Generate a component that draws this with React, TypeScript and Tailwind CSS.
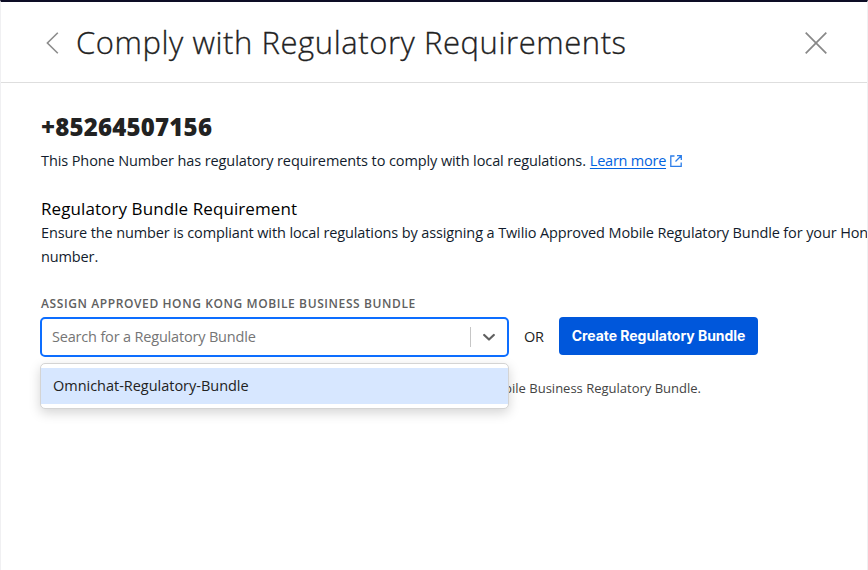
function BackIcon() {
  return (
    <svg className="h-[22px] w-[13px] shrink-0" viewBox="0 0 13 22" fill="none" stroke="#8c8c8c" strokeWidth="1.6">
      <path d="M11.8 0.8 1.4 11l10.4 10.2" />
    </svg>
  );
}

function CloseIcon() {
  return (
    <svg className="h-[22px] w-[22px] shrink-0" viewBox="0 0 22 22" fill="none" stroke="#888" strokeWidth="1.7">
      <path d="m0.7 0.7 20.6 20.6M21.3 0.7 0.7 21.3" />
    </svg>
  );
}

function ExternalIcon() {
  return (
    <svg className="h-3 w-3 shrink-0" viewBox="0 0 12 12" fill="none" stroke="#2b7de9" strokeWidth="1.3">
      <path d="M4.5 1H.8v10.3h10.4V7.5M7 .7h4.3V5M11.2.8 5.5 6.5" />
    </svg>
  );
}

export default function App() {
  return (
    <div className="h-[570px] w-[868px] overflow-hidden border-x border-t-2 border-x-[#f0f0f2] border-t-[#0d0d25] bg-white font-['Open_Sans','Noto_Sans',sans-serif] text-[#121c2d]">
      <header className="flex h-[81px] items-center border-b border-[#dedede] pl-[45px] pr-10">
        <div className="pt-0.5"><BackIcon /></div>
        <h1 className="ml-[17px] whitespace-nowrap text-[31px] font-light leading-10 tracking-[0.57px] text-[#222] [-webkit-text-stroke:0.3px_#222]">Comply with Regulatory Requirements</h1>
        <div className="ml-auto pt-0.5"><CloseIcon /></div>
      </header>
      <main className="pl-10 pt-[30px]">
        <h2 className="whitespace-nowrap text-[24px] font-extrabold leading-7 tracking-[0.2px] text-[#222]">+85264507156</h2>
        <p className="mt-2 flex items-center whitespace-nowrap text-[14.5px] leading-6 tracking-[-0.1px]">
          <span>This Phone Number has regulatory requirements to comply with local regulations.</span>
          <a className="ml-1 tracking-[-0.24px] text-[#0263e0] underline underline-offset-2">Learn more</a>
          <span className="ml-1"><ExternalIcon /></span>
        </p>
        <h3 className="mt-6 whitespace-nowrap text-[17px] leading-6 tracking-[0.09px] text-black">Regulatory Bundle Requirement</h3>
        <p className="text-[14.5px] leading-6 tracking-[-0.12px]">
          <span className="whitespace-nowrap">Ensure the number is compliant with local regulations by assigning a Twilio Approved Mobile Regulatory Bundle for your Hon</span>
          <br />number.
        </p>
        <label className="mt-[25px] block whitespace-nowrap text-[12px] font-semibold leading-5 tracking-[0.6px] text-[#606060]">ASSIGN APPROVED HONG KONG MOBILE BUSINESS BUNDLE</label>
        <div className="mt-[3px] flex items-start">
          <div className="relative -ml-px h-10 w-[469px] shrink-0">
            <div className="flex h-10 items-center rounded-[5px] border-2 border-[#0d6eff] bg-white">
              <span className="pl-2.5 text-[14.5px] tracking-[-0.18px] text-[#757575]">Search for a Regulatory Bundle</span>
              <span className="ml-auto h-5 w-px bg-[#c6c6c6]" />
              <svg className="ml-3 mr-3 h-3 w-3 shrink-0" viewBox="0 0 12 12" fill="none" stroke="#606060" strokeWidth="2.2" strokeLinecap="round" strokeLinejoin="round"><path d="m1.2 4 4.8 4.5L10.8 4" /></svg>
            </div>
            <div className="absolute left-0 top-[46px] z-10 h-[46px] w-[469px] rounded-[5px] border border-[#d4d4d4] bg-white py-1 shadow-[0_4px_12px_rgba(0,0,0,0.17)]">
              <div className="flex h-9 items-center bg-[#d7e7ff] pl-3 text-[14.5px] tracking-[-0.02px] text-[#222]">Omnichat-Regulatory-Bundle</div>
            </div>
          </div>
          <span className="ml-[15px] w-[35px] text-[14.5px] leading-[39px] tracking-[-0.16px] text-[#222]">OR</span>
          <button className="h-[38px] w-[199px] whitespace-nowrap rounded bg-[#0057db] pb-0.5 font-['Inter',sans-serif] text-[14px] font-bold tracking-[-0.04px] text-white">Create Regulatory Bundle</button>
        </div>
        <p className="mt-[21px] w-[660px] whitespace-nowrap text-right text-[13px] leading-5 text-[#444]">Mobile Business Regulatory Bundle.</p>
      </main>
    </div>
  );
}
